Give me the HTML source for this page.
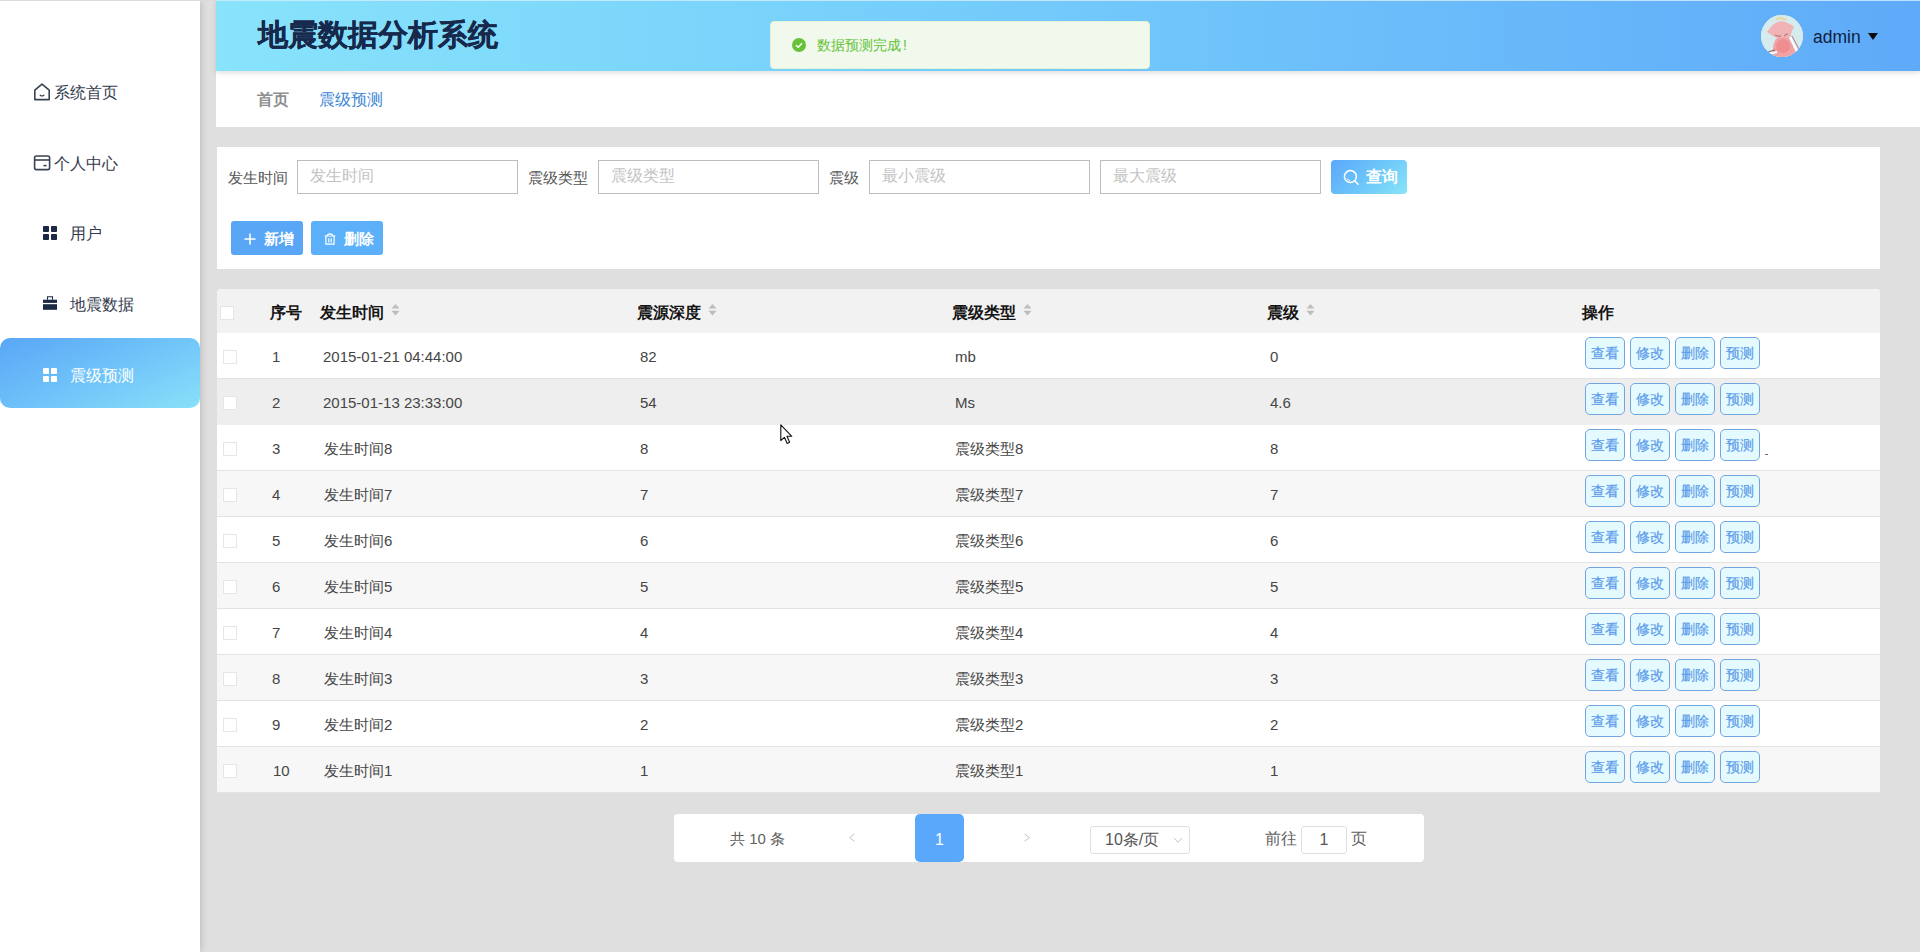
<!DOCTYPE html>
<html><head><meta charset="utf-8">
<style>
*{margin:0;padding:0;box-sizing:border-box;}
html,body{width:1920px;height:952px;overflow:hidden;}
body{background:#dfdfdf;font-family:"Liberation Sans",sans-serif;position:relative;}
.abs{position:absolute;}
#topline{z-index:6;left:0;top:0;width:1920px;height:1px;background:linear-gradient(90deg,#dadada 0,#dadada 216px,#c2ecfc 216px,#bfe0fd 100%);}
#side{left:0;top:1px;width:200px;height:951px;background:#fff;box-shadow:1px 0 7px rgba(0,0,0,0.17);}
.mi{position:absolute;left:0;width:200px;height:70px;font-size:16px;color:#323a4b;}
.mi .tx{position:absolute;top:29px;line-height:18px;white-space:nowrap;}
.mi svg{position:absolute;}
.mi.act{background:linear-gradient(155deg,#5aa6f6 0%,#6fc3f9 50%,#88e0f8 100%);border-radius:10px;color:#fff;}
#hdr{z-index:5;left:216px;top:0px;width:1704px;height:71px;background:linear-gradient(90deg,#88e3fb 0%,#76cffb 40%,#5faaf9 100%);box-shadow:0 2px 5px rgba(0,0,0,0.13);}
#title{left:42px;top:17px;font-size:30px;line-height:36px;font-weight:bold;color:#16284b;-webkit-text-stroke:0.3px #16284b;white-space:nowrap;}
#toast{z-index:10;left:770px;top:21px;width:380px;height:48px;background:#f0f9eb;border:1px solid #e1f3d8;border-radius:4px;}
#toast .ic{position:absolute;left:21px;top:16px;width:14px;height:14px;border-radius:50%;background:#67c23a;}
#toast .tx{position:absolute;left:46px;top:15px;font-size:14px;line-height:16px;color:#67c23a;white-space:nowrap;}
#avatar{left:1545px;top:15px;width:42px;height:42px;border-radius:50%;background:#d9e6ea;overflow:hidden;}
#admin{left:1597px;top:27px;font-size:17.5px;line-height:20px;color:#0f1f3d;}
#caret{left:1652px;top:33px;width:0;height:0;border-left:5px solid transparent;border-right:5px solid transparent;border-top:7px solid #0a0a0a;}
#bc{left:216px;top:71px;width:1704px;height:56px;background:#fff;}
#bc .b1{position:absolute;left:41px;top:20px;font-size:16px;line-height:18px;color:#8f8f8f;font-weight:bold;}
#bc .b2{position:absolute;left:103px;top:20px;font-size:16px;line-height:18px;color:#3c86d4;}
#search{left:217px;top:147px;width:1663px;height:122px;background:#fff;}
.lbl{position:absolute;top:22px;font-size:15px;line-height:18px;color:#555;white-space:nowrap;}
.inp{position:absolute;top:13px;width:221px;height:34px;border:1px solid #bdbdbd;font-size:16px;color:#c3c3c3;}
.inp span{position:absolute;left:12px;top:6px;line-height:18px;white-space:nowrap;}
#qbtn{left:1114px;top:13px;width:76px;height:34px;border-radius:4px;background:linear-gradient(135deg,#5aa8fa 0%,#6fc8f9 55%,#88e4f8 100%);color:#fff;}
#qbtn span{position:absolute;left:35px;top:8px;font-size:16px;line-height:18px;font-weight:bold;}
.pbtn{position:absolute;top:74px;width:72px;height:34px;border-radius:3px;color:#fff;}
.pbtn span{position:absolute;left:33px;top:9px;font-size:15px;line-height:18px;font-weight:bold;}
#table{left:217px;top:289px;width:1663px;height:504px;background:#fff;border-radius:4px 4px 0 0;overflow:hidden;}
#thead{position:absolute;left:0;top:0;width:1663px;height:44px;background:#f2f2f2;}
.th{position:absolute;top:15px;font-size:16px;line-height:18px;font-weight:bold;color:#151515;white-space:nowrap;}
.sort{position:absolute;top:15px;width:9px;height:12px;}
.row{position:absolute;left:0;width:1663px;height:46px;background:#fff;border-bottom:1px solid #e3e3e3;}
.row.even{background:#f7f7f7;}
.row.hov{background:#eeeeee;border-bottom-color:#eeeeee;}
.row .c{position:absolute;top:15px;font-size:15px;line-height:18px;color:#454545;white-space:nowrap;}
.cb{position:absolute;left:6px;top:17px;width:14px;height:14px;background:#fff;border:1px solid #e6e6e6;}
.ob{position:absolute;top:4px;width:40px;height:32px;border:1px solid #73a5de;border-radius:5px;background:#e5faff;color:#5a9cea;font-size:14px;line-height:30px;text-align:center;-webkit-text-stroke:0.2px #5a9cea;}
#pager{left:674px;top:814px;width:750px;height:48px;background:#fff;border-radius:4px;}
#pager .t{position:absolute;font-size:15px;line-height:18px;color:#606060;white-space:nowrap;}
#pactive{position:absolute;left:241px;top:0;width:49px;height:48px;border-radius:5px;background:#5aa8fb;color:#fff;font-size:16px;line-height:52px;text-align:center;}
#psel{position:absolute;left:416px;top:12px;width:100px;height:28px;border:1px solid #dcdfe6;border-radius:3px;}
#pin{position:absolute;left:627px;top:12px;width:46px;height:28px;border:1px solid #dcdfe6;border-radius:3px;font-size:16px;line-height:26px;text-align:center;color:#555;}
#cursor{left:780px;top:424px;}
</style></head>
<body>
<div id="topline" class="abs"></div>
<div id="side" class="abs">
  <div class="mi" style="top:52px;">
    <svg style="left:33px;top:30px;" width="18" height="18" viewBox="0 0 18 18"><path d="M1.8 16.6V7.2L9 1.2L16.2 7.2V16.6Z" fill="none" stroke="#3b4253" stroke-width="1.6" stroke-linejoin="round"/><path d="M7.2 12.2Q9 13.6 10.8 12.2" fill="none" stroke="#3b4253" stroke-width="1.4" stroke-linecap="round"/></svg>
    <span class="tx" style="left:54px;top:31px;">系统首页</span></div>
  <div class="mi" style="top:123px;">
    <svg style="left:33px;top:31px;" width="18" height="16" viewBox="0 0 18 16"><rect x="1.6" y="1" width="15" height="13.6" rx="1.8" fill="none" stroke="#3b4253" stroke-width="1.6"/><path d="M1.6 5H16.6" stroke="#3b4253" stroke-width="1.6"/><path d="M10.5 10.6H13.6" stroke="#3b4253" stroke-width="1.6"/></svg>
    <span class="tx" style="left:54px;top:31px;">个人中心</span></div>
  <div class="mi" style="top:195px;">
    <svg style="left:43px;top:30px;" width="14" height="14" viewBox="0 0 14 14"><rect x="0" y="0" width="6" height="6" rx="0.8" fill="#1c2945"/><rect x="8" y="0" width="6" height="6" rx="0.8" fill="#1c2945"/><rect x="0" y="8" width="6" height="6" rx="0.8" fill="#1c2945"/><rect x="8" y="8" width="6" height="6" rx="0.8" fill="#1c2945"/></svg>
    <span class="tx" style="left:70px;">用户</span></div>
  <div class="mi" style="top:266px;">
    <svg style="left:43px;top:28px;" width="14" height="16" viewBox="0 0 14 16"><path d="M4.5 4.8V1.8H9.5V4.8" fill="none" stroke="#1c2945" stroke-width="1.1"/><rect x="0" y="4.7" width="14" height="3.2" fill="#1c2945"/><rect x="0" y="9.2" width="14" height="5.6" fill="#1c2945"/></svg>
    <span class="tx" style="left:70px;">地震数据</span></div>
  <div class="mi act" style="top:337px;">
    <svg style="left:43px;top:30px;" width="14" height="14" viewBox="0 0 14 14"><rect x="0" y="0" width="6" height="6" rx="0.8" fill="#fff"/><rect x="8" y="0" width="6" height="6" rx="0.8" fill="#fff"/><rect x="0" y="8" width="6" height="6" rx="0.8" fill="#fff"/><rect x="8" y="8" width="6" height="6" rx="0.8" fill="#fff"/></svg>
    <span class="tx" style="left:70px;">震级预测</span></div>
</div>
<div id="hdr" class="abs">
  <div id="title" class="abs">地震数据分析系统</div>
  <div id="avatar" class="abs">
    <svg width="42" height="42" viewBox="0 0 42 42"><rect width="42" height="42" fill="#d6ebee"/>
    <path d="M15 4Q20 2 25 5" fill="none" stroke="#e9d79a" stroke-width="2"/>
    <path d="M6 17Q11 10 13 9Q20 4 27 8Q31 10 33 12Q31 15 30 19L30 23Q26 24 22 23Q16 24 12 21Q9 19 6 17Z" fill="#f1b3b6"/>
    <path d="M12 42Q11 30 15 24Q21 21 27 23Q33 27 35 36L36 42Z" fill="#f0a2a4"/>
    <ellipse cx="22" cy="31" rx="7" ry="7" fill="#ef8d90"/>
    <path d="M14 20Q18 22 20 21M23 21Q25 19 27 19" fill="none" stroke="#a86a74" stroke-width="1"/>
    <path d="M29 22L37 39" stroke="#ffffff" stroke-width="2.2"/>
    <path d="M31 21L39 36" stroke="#9a6070" stroke-width="0.8"/>
    <path d="M8 39L16 37" stroke="#ffffff" stroke-width="2"/>
    <path d="M7 37L14 35" stroke="#8a5a66" stroke-width="1"/>
    </svg>
  </div>
  <div id="admin" class="abs">admin</div>
  <div id="caret" class="abs"></div>
</div>
<div id="bc" class="abs"><span class="b1">首页</span><span class="b2">震级预测</span></div>
<div id="toast" class="abs"><span class="ic"><svg width="14" height="14" viewBox="0 0 14 14" style="position:absolute;left:0;top:0;"><path d="M4 7.2L6.2 9.3L10 5.3" fill="none" stroke="#fff" stroke-width="1.5"/></svg></span><span class="tx">数据预测完成<span style="margin-left:2px;">!</span></span></div>
<div id="search" class="abs">
  <span class="lbl" style="left:11px;">发生时间</span>
  <div class="inp" style="left:80px;"><span>发生时间</span></div>
  <span class="lbl" style="left:311px;">震级类型</span>
  <div class="inp" style="left:381px;"><span>震级类型</span></div>
  <span class="lbl" style="left:612px;">震级</span>
  <div class="inp" style="left:652px;"><span>最小震级</span></div>
  <div class="inp" style="left:883px;"><span>最大震级</span></div>
  <div id="qbtn" class="abs">
    <svg style="position:absolute;left:12px;top:9px;" width="18" height="18" viewBox="0 0 18 18"><circle cx="7.4" cy="7.6" r="6" fill="none" stroke="#fff" stroke-width="1.5"/><path d="M11.6 11.8L15 15.2" stroke="#fff" stroke-width="1.5" stroke-linecap="round"/><path d="M4 9.5Q5 11.4 7 11.8" fill="none" stroke="#fff" stroke-width="1"/></svg>
    <span>查询</span></div>
  <div class="pbtn" style="left:14px;background:#5aa6f6;">
    <svg style="position:absolute;left:13px;top:12px;" width="12" height="12" viewBox="0 0 12 12"><path d="M6 0.5V11.5M0.5 6H11.5" stroke="#fff" stroke-width="1.6"/></svg>
    <span>新增</span></div>
  <div class="pbtn" style="left:94px;background:#5cb0fa;">
    <svg style="position:absolute;left:13px;top:12px;" width="12" height="12" viewBox="0 0 12 12"><path d="M0.6 3H11.4M3 3Q3.3 0.9 6 0.9Q8.7 0.9 9 3M1.9 3V11.2H10.1V3M4.8 5.2V9.4M7.2 5.2V9.4" fill="none" stroke="#fff" stroke-width="1.2"/></svg>
    <span>删除</span></div>
</div>
<div id="table" class="abs">
  <div id="thead">
    <span class="cb" style="left:3px;top:17px;"></span>
    <span class="th" style="left:53px;">序号</span>
    <span class="th" style="left:103px;">发生时间</span>
    <svg class="sort" style="left:174px;" viewBox="0 0 9 12"><path d="M0.5 4.5L4.5 0L8.5 4.5Z" fill="#bdbdbd"/><path d="M0.5 6.8L4.5 11.5L8.5 6.8Z" fill="#bdbdbd"/></svg>
    <span class="th" style="left:420px;">震源深度</span>
    <svg class="sort" style="left:491px;" viewBox="0 0 9 12"><path d="M0.5 4.5L4.5 0L8.5 4.5Z" fill="#bdbdbd"/><path d="M0.5 6.8L4.5 11.5L8.5 6.8Z" fill="#bdbdbd"/></svg>
    <span class="th" style="left:735px;">震级类型</span>
    <svg class="sort" style="left:806px;" viewBox="0 0 9 12"><path d="M0.5 4.5L4.5 0L8.5 4.5Z" fill="#bdbdbd"/><path d="M0.5 6.8L4.5 11.5L8.5 6.8Z" fill="#bdbdbd"/></svg>
    <span class="th" style="left:1050px;">震级</span>
    <svg class="sort" style="left:1089px;" viewBox="0 0 9 12"><path d="M0.5 4.5L4.5 0L8.5 4.5Z" fill="#bdbdbd"/><path d="M0.5 6.8L4.5 11.5L8.5 6.8Z" fill="#bdbdbd"/></svg>
    <span class="th" style="left:1365px;">操作</span>
  </div>
<div class="row" style="top:44px;"><span class="cb"></span><span class="c" style="left:55px;">1</span><span class="c" style="left:106px;">2015-01-21 04:44:00</span><span class="c" style="left:423px;">82</span><span class="c" style="left:738px;">mb</span><span class="c" style="left:1053px;">0</span><span class="ob" style="left:1368px;">查看</span><span class="ob" style="left:1413px;">修改</span><span class="ob" style="left:1458px;">删除</span><span class="ob" style="left:1503px;">预测</span></div>
<div class="row hov" style="top:90px;"><span class="cb"></span><span class="c" style="left:55px;">2</span><span class="c" style="left:106px;">2015-01-13 23:33:00</span><span class="c" style="left:423px;">54</span><span class="c" style="left:738px;">Ms</span><span class="c" style="left:1053px;">4.6</span><span class="ob" style="left:1368px;">查看</span><span class="ob" style="left:1413px;">修改</span><span class="ob" style="left:1458px;">删除</span><span class="ob" style="left:1503px;">预测</span></div>
<div class="row" style="top:136px;"><span class="cb"></span><span class="c" style="left:55px;">3</span><span class="c" style="left:107px;">发生时间8</span><span class="c" style="left:423px;">8</span><span class="c" style="left:738px;">震级类型8</span><span class="c" style="left:1053px;">8</span><span class="ob" style="left:1368px;">查看</span><span class="ob" style="left:1413px;">修改</span><span class="ob" style="left:1458px;">删除</span><span class="ob" style="left:1503px;">预测</span></div>
<div class="row even" style="top:182px;"><span class="cb"></span><span class="c" style="left:55px;">4</span><span class="c" style="left:107px;">发生时间7</span><span class="c" style="left:423px;">7</span><span class="c" style="left:738px;">震级类型7</span><span class="c" style="left:1053px;">7</span><span class="ob" style="left:1368px;">查看</span><span class="ob" style="left:1413px;">修改</span><span class="ob" style="left:1458px;">删除</span><span class="ob" style="left:1503px;">预测</span></div>
<div class="row" style="top:228px;"><span class="cb"></span><span class="c" style="left:55px;">5</span><span class="c" style="left:107px;">发生时间6</span><span class="c" style="left:423px;">6</span><span class="c" style="left:738px;">震级类型6</span><span class="c" style="left:1053px;">6</span><span class="ob" style="left:1368px;">查看</span><span class="ob" style="left:1413px;">修改</span><span class="ob" style="left:1458px;">删除</span><span class="ob" style="left:1503px;">预测</span></div>
<div class="row even" style="top:274px;"><span class="cb"></span><span class="c" style="left:55px;">6</span><span class="c" style="left:107px;">发生时间5</span><span class="c" style="left:423px;">5</span><span class="c" style="left:738px;">震级类型5</span><span class="c" style="left:1053px;">5</span><span class="ob" style="left:1368px;">查看</span><span class="ob" style="left:1413px;">修改</span><span class="ob" style="left:1458px;">删除</span><span class="ob" style="left:1503px;">预测</span></div>
<div class="row" style="top:320px;"><span class="cb"></span><span class="c" style="left:55px;">7</span><span class="c" style="left:107px;">发生时间4</span><span class="c" style="left:423px;">4</span><span class="c" style="left:738px;">震级类型4</span><span class="c" style="left:1053px;">4</span><span class="ob" style="left:1368px;">查看</span><span class="ob" style="left:1413px;">修改</span><span class="ob" style="left:1458px;">删除</span><span class="ob" style="left:1503px;">预测</span></div>
<div class="row even" style="top:366px;"><span class="cb"></span><span class="c" style="left:55px;">8</span><span class="c" style="left:107px;">发生时间3</span><span class="c" style="left:423px;">3</span><span class="c" style="left:738px;">震级类型3</span><span class="c" style="left:1053px;">3</span><span class="ob" style="left:1368px;">查看</span><span class="ob" style="left:1413px;">修改</span><span class="ob" style="left:1458px;">删除</span><span class="ob" style="left:1503px;">预测</span></div>
<div class="row" style="top:412px;"><span class="cb"></span><span class="c" style="left:55px;">9</span><span class="c" style="left:107px;">发生时间2</span><span class="c" style="left:423px;">2</span><span class="c" style="left:738px;">震级类型2</span><span class="c" style="left:1053px;">2</span><span class="ob" style="left:1368px;">查看</span><span class="ob" style="left:1413px;">修改</span><span class="ob" style="left:1458px;">删除</span><span class="ob" style="left:1503px;">预测</span></div>
<div class="row even" style="top:458px;"><span class="cb"></span><span class="c" style="left:56px;">10</span><span class="c" style="left:107px;">发生时间1</span><span class="c" style="left:423px;">1</span><span class="c" style="left:738px;">震级类型1</span><span class="c" style="left:1053px;">1</span><span class="ob" style="left:1368px;">查看</span><span class="ob" style="left:1413px;">修改</span><span class="ob" style="left:1458px;">删除</span><span class="ob" style="left:1503px;">预测</span></div>
</div>
<div id="pager" class="abs">
  <span class="t" style="left:56px;top:16px;">共 10 条</span>
  <svg style="position:absolute;left:174px;top:19px;" width="8" height="10" viewBox="0 0 8 10"><path d="M6.5 1L1.5 4.6L6.5 8.2" fill="none" stroke="#c0c4cc" stroke-width="1"/></svg>
  <div id="pactive">1</div>
  <svg style="position:absolute;left:349px;top:19px;" width="8" height="10" viewBox="0 0 8 10"><path d="M1.5 1L6.5 4.6L1.5 8.2" fill="none" stroke="#c0c4cc" stroke-width="1"/></svg>
  <div id="psel"><span style="position:absolute;left:14px;top:4px;font-size:16px;line-height:18px;color:#555;white-space:nowrap;">10条/页</span>
    <svg style="position:absolute;left:82px;top:10px;" width="10" height="7" viewBox="0 0 10 7"><path d="M1 1.2L5 5.2L9 1.2" fill="none" stroke="#c0c4cc" stroke-width="1"/></svg></div>
  <span class="t" style="left:591px;top:16px;font-size:16px;">前往</span>
  <div id="pin">1</div>
  <span class="t" style="left:677px;top:16px;font-size:16px;">页</span>
</div>
<div class="abs" style="left:1765px;top:454px;width:3px;height:1px;background:#8a5a6a;"></div>
<svg id="cursor" class="abs" width="14" height="22" viewBox="0 0 14 22"><path d="M0.8 0.8V16.5L4.4 13.3L7.2 19.4L9.6 18.3L7 12.3H11.8Z" fill="#fff" stroke="#111" stroke-width="1.1" stroke-linejoin="round"/></svg>
</body></html>
